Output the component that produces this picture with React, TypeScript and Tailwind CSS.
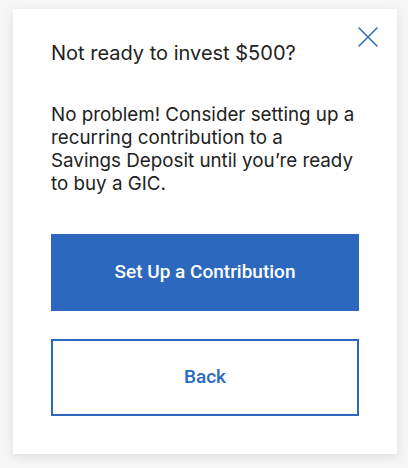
import React from "react";

export default function App() {
  return (
    <div
      className="w-[408px] h-[468px] bg-[#f6f6f6] pt-[9px] px-[13px]"
      style={{ fontFamily: "Inter, Roboto, 'Liberation Sans', sans-serif" }}
    >
      <div className="relative w-[384px] h-[445px] bg-white shadow-[0_3px_10px_rgba(0,0,0,0.10)] px-[38px] pt-[31px]">
        <button className="absolute right-[19px] top-[18px] w-[20px] h-[20px]" aria-label="Close">
          <svg width="20" height="20" viewBox="0 0 20 20" fill="none">
            <path d="M0.5 0.5L19.5 19.5M19.5 0.5L0.5 19.5" stroke="#2d6bc1" strokeWidth="1.5" />
          </svg>
        </button>
        <h2 className="text-[20px] leading-[26px] text-[#222222] font-normal">Not ready to invest $500?</h2>
        <p className="mt-[37px] w-[310px] text-[18.8px] leading-[23px] text-[#222222]">
          No problem! Consider setting up a recurring contribution to a<br />
          Savings Deposit until you’re ready to buy a GIC.
        </p>
        <div className="mt-[39px] flex flex-col gap-[28px]">
          <button
            className="h-[77px] w-full bg-[#2c69be] text-white text-[19px] font-medium"
            style={{ fontFamily: "Roboto, sans-serif" }}
          >
            Set Up a Contribution
          </button>
          <button
            className="h-[77px] w-full border-2 border-[#2c69be] text-[#2c69be] text-[19px] font-medium bg-white"
            style={{ fontFamily: "Roboto, sans-serif" }}
          >
            Back
          </button>
        </div>
      </div>
    </div>
  );
}
